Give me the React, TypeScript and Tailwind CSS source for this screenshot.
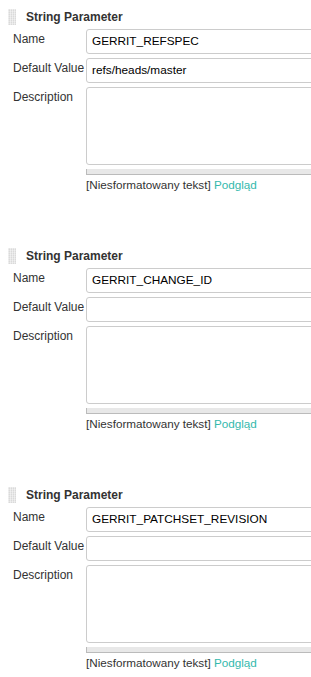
import React from "react";

type Param = { name: string; defaultValue: string };

const params: Param[] = [
  { name: "GERRIT_REFSPEC", defaultValue: "refs/heads/master" },
  { name: "GERRIT_CHANGE_ID", defaultValue: "" },
  { name: "GERRIT_PATCHSET_REVISION", defaultValue: "" },
];

function Grip() {
  const dots = [];
  for (let r = 0; r < 8; r++) {
    for (let c = 0; c < 4; c++) {
      dots.push(<rect key={`${r}-${c}`} x={c * 2 + 0.5} y={r * 2 + 0.5} width="1.4" height="1.2" fill="#c4c4c4" />);
    }
  }
  return (
    <svg width="9" height="17" viewBox="0 0 9 17" className="shrink-0">
      {dots}
    </svg>
  );
}

function Row({ label, children }: { label: string; children: React.ReactNode }) {
  return (
    <div className="flex">
      <div className="w-[86px] shrink-0 whitespace-nowrap pl-[13px] pt-[3px] text-[12px] leading-[15px] text-[#333]">{label}</div>
      <div className="-mr-4 flex-1">{children}</div>
    </div>
  );
}

function ParamBlock({ p }: { p: Param }) {
  return (
    <div className="h-[239px]">
      <div className="flex items-center gap-[9px] pl-[8px] pt-[8px]">
        <Grip />
        <span className="text-[12px] font-bold text-[#333]">String Parameter</span>
      </div>
      <div className="mt-[3px] flex flex-col gap-[4px]">
        <Row label="Name">
          <div className="h-[25px] rounded-[3px] border border-[#ccc] bg-white pl-[5px] text-[11.8px] leading-[23px] text-black">{p.name}</div>
        </Row>
        <Row label="Default Value">
          <div className="h-[25px] rounded-[3px] border border-[#ccc] bg-white pl-[5px] text-[11.8px] leading-[23px] text-black">{p.defaultValue}</div>
        </Row>
        <Row label="Description">
          <div className="h-[78px] rounded-[3px] border border-[#ccc] bg-white" />
          <div className="mt-[4px] h-[6px] border-b border-l border-[#bbb] bg-[#e8e8e8]" />
          <div className="mt-[2px] text-[11.7px] leading-[15px] text-[#333]">
            [Niesformatowany tekst] <span className="text-[#33b9ad]">Podgląd</span>
          </div>
        </Row>
      </div>
    </div>
  );
}

export default function App() {
  return (
    <div className="h-[677px] w-[311px] overflow-hidden bg-white font-['Liberation_Sans',Arial,sans-serif]">
      {params.map((p) => (
        <ParamBlock key={p.name} p={p} />
      ))}
    </div>
  );
}
